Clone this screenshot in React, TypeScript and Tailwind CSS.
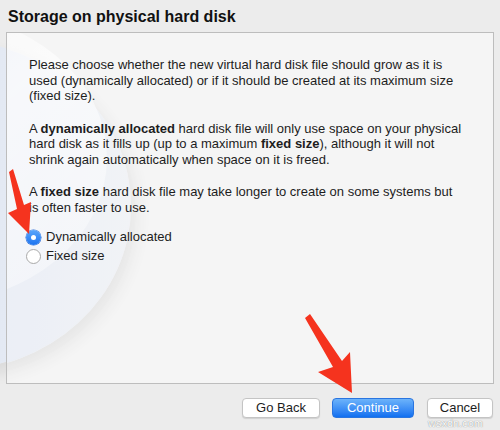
import React from 'react'

function Radio({ checked, label }: { checked?: boolean; label: string }) {
  return (
    <label className="flex items-center gap-[5px] h-[18px]">
      {checked ? (
        <span className="w-[15px] h-[15px] rounded-full bg-gradient-to-b from-[#5aa6fb] to-[#1a73f0] flex items-center justify-center shadow-[0_0_0_0.5px_#2f6fd6]">
          <span className="w-[5px] h-[5px] rounded-full bg-white" />
        </span>
      ) : (
        <span className="w-[15px] h-[15px] rounded-full bg-white border border-[#a9a9a9]" />
      )}
      <span>{label}</span>
    </label>
  )
}

export default function App() {
  return (
    <div
      className="relative w-[500px] h-[430px] bg-[#ececec] overflow-hidden text-[#1d1d1d]"
      style={{ fontFamily: '"Liberation Sans", Arial, sans-serif' }}
    >
      <div className="absolute left-[-230px] top-[40px] w-[360px] h-[330px] rounded-[50%] bg-gradient-to-r from-[#bccbe8] via-[#dfe6f3] to-[#eef1f7] shadow-[6px_8px_14px_rgba(0,0,0,0.08)] opacity-90" />

      <h1 className="relative px-2 pt-[8px] h-[32px] text-[16px] font-bold leading-[18px] text-[#111]">
        Storage on physical hard disk
      </h1>

      <div className="relative mx-[6px] h-[352px] border border-[#bdbdbd] bg-[#f6f6f6]/90 overflow-hidden">
        <div className="absolute left-[-236px] top-[8px] w-[360px] h-[330px] rounded-[50%] bg-gradient-to-r from-[#cfdaee] via-[#e5ebf6] to-[#f0f2f7] shadow-[6px_8px_16px_rgba(0,0,0,0.07)] opacity-75" />
        <div className="absolute left-[-250px] top-[-20px] w-[350px] h-[290px] rounded-[50%] bg-gradient-to-br from-white/0 via-white/60 to-white/30" />
        <div className="relative pl-[22px] pt-[24px] text-[13px] leading-[15.5px]">
          <p>
            Please choose whether the new virtual hard disk file should grow as it is
            <br />
            used (dynamically allocated) or if it should be created at its maximum size
            <br />
            (fixed size).
          </p>
          <p className="mt-[17px]">
            A <b>dynamically allocated</b> hard disk file will only use space on your physical
            <br />
            hard disk as it fills up (up to a maximum <b>fixed size</b>), although it will not
            <br />
            shrink again automatically when space on it is freed.
          </p>
          <p className="mt-[17px]">
            A <b>fixed size</b> hard disk file may take longer to create on some systems but
            <br />
            is often faster to use.
          </p>
          <div className="mt-[13px] flex flex-col gap-[1px] -ml-[3px]">
            <Radio checked label="Dynamically allocated" />
            <Radio label="Fixed size" />
          </div>
        </div>
      </div>

      <div className="relative flex justify-end gap-[12px] pr-[7px] pt-[14px] text-[13px]">
        <button className="w-[78px] h-[20px] rounded-[4px] bg-white border border-[#c4c4c4] shadow-[0_1px_1px_rgba(0,0,0,0.12)] leading-[18px]">
          Go Back
        </button>
        <button className="w-[82px] h-[20px] rounded-[4px] bg-gradient-to-b from-[#6cb3fa] to-[#0e6ff0] text-white border border-[#2a75e0] leading-[18px] mr-[1px]">
          Continue
        </button>
        <button className="w-[66px] h-[20px] rounded-[4px] bg-white border border-[#c4c4c4] shadow-[0_1px_1px_rgba(0,0,0,0.12)] leading-[18px]">
          Cancel
        </button>
      </div>

      <span className="absolute left-[428px] top-[417px] text-[11px] leading-[13px] text-white [text-shadow:0_0_1px_#666]">
        wsxdn.com
      </span>

      <svg className="absolute left-0 top-0 w-[500px] h-[430px] pointer-events-none" viewBox="0 0 500 430">
        <polygon fill="#f5331e" points="9,172 13,169 24,205 31,202 29,234 8,213 17,209" />
        <polygon fill="#f5331e" points="305,318 310,314 342,361 350,352 352,393 318,372 333,367" />
      </svg>
    </div>
  )
}
